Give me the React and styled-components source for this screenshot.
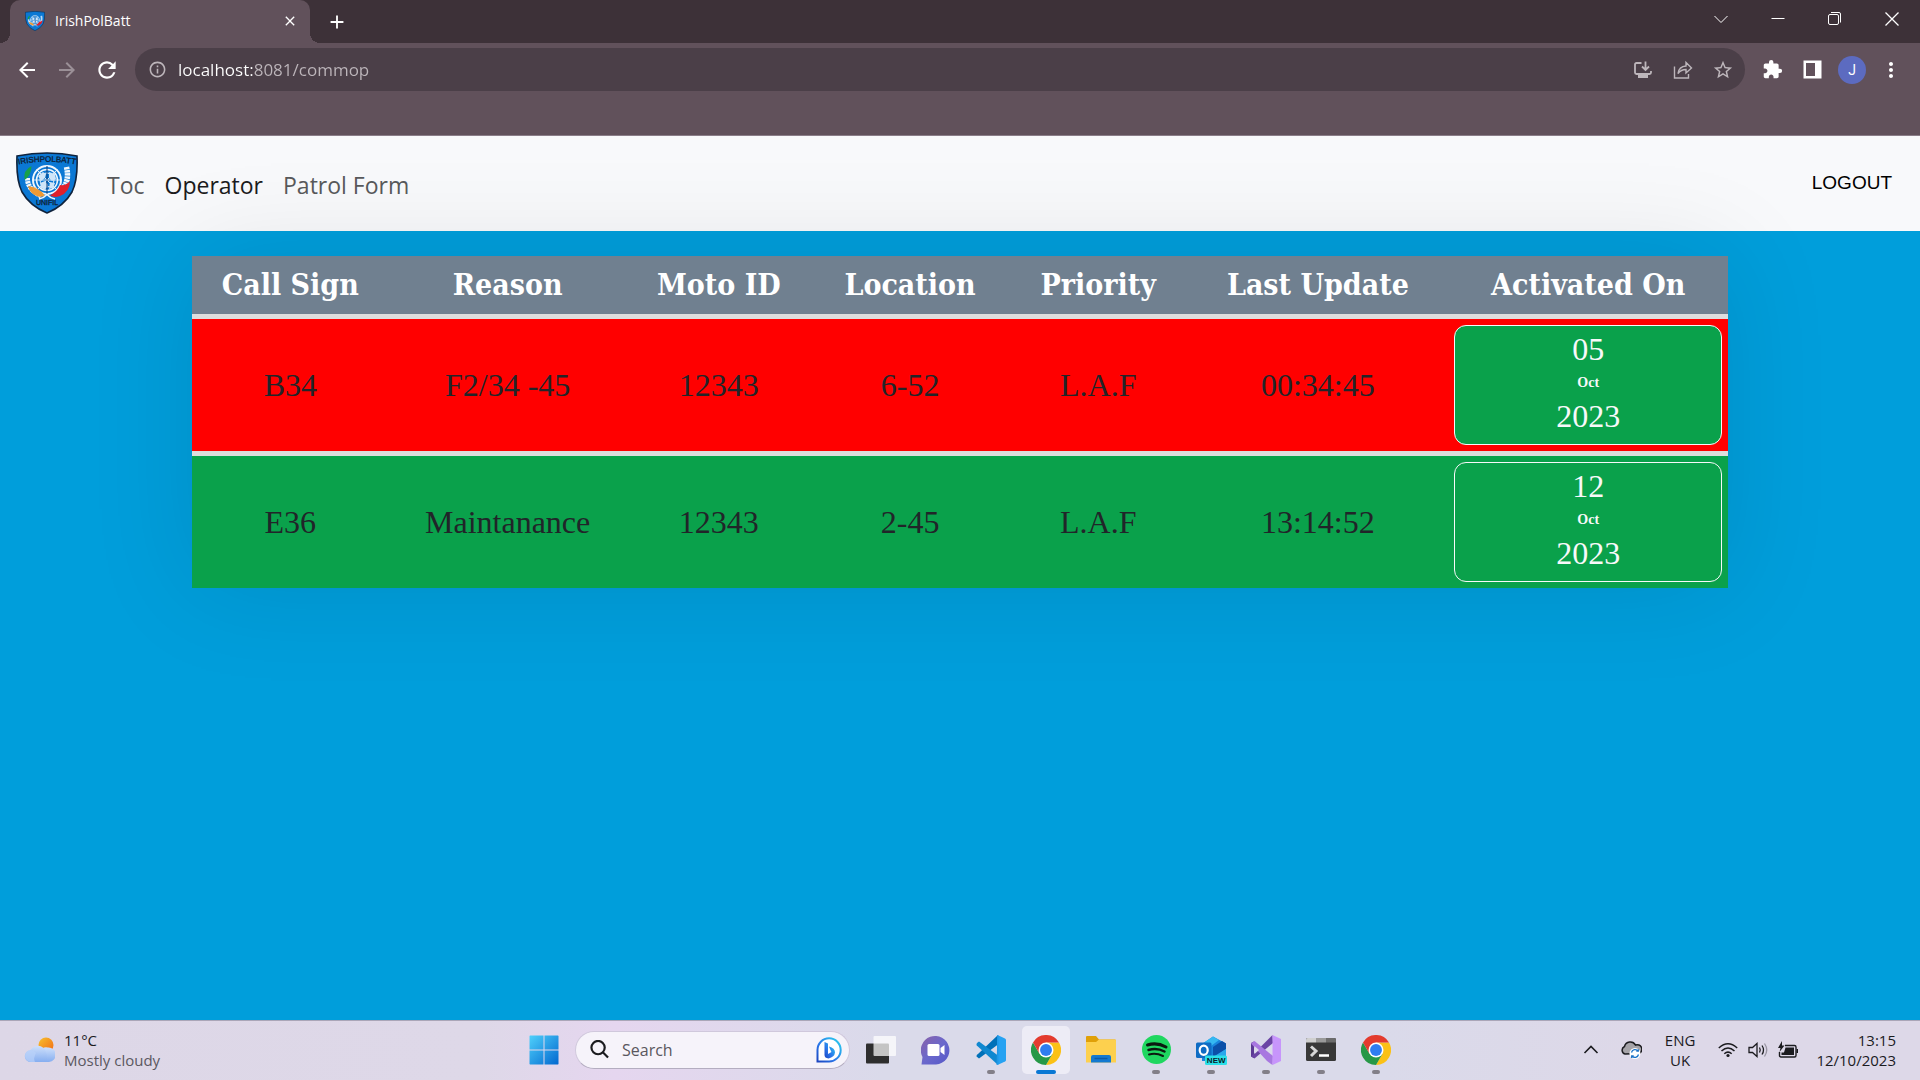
import React from "react";
import styled, { createGlobalStyle } from "styled-components";
import {
  MdArrowBack,
  MdArrowForward,
  MdRefresh,
  MdInfoOutline,
  MdStarBorder,
  MdExtension,
  MdMoreVert,
  MdClose,
  MdAdd,
} from "react-icons/md";

const UI = `"Open Sans", "Noto Sans", sans-serif`;
const SERIF = `"Liberation Serif", serif`;

const GlobalStyle = createGlobalStyle`
  *, *::before, *::after { box-sizing: border-box; }
  body { margin: 0; font-family: ${UI}; }
  button { font: inherit; color: inherit; border: 0; padding: 0; background: none; }
  svg { display: block; flex: none; }
`;

const Desktop = styled.div`
  min-height: 100vh;
  display: flex;
  flex-direction: column;
  background: #009edb;
`;

/* ---------- browser window ---------- */

const TabStrip = styled.div`
  height: 43px;
  display: flex;
  align-items: stretch;
  background: #3d3138;
  color: #fff;
`;

const Tab = styled.div`
  position: relative;
  width: 300px;
  margin-left: 10px;
  padding: 0 10px 2px 15px;
  display: flex;
  align-items: center;
  gap: 10px;
  border-radius: 10px 10px 0 0;
  background: #61515b;
  font-size: 14px;

  &::before,
  &::after {
    content: "";
    position: absolute;
    bottom: 0;
    width: 10px;
    height: 10px;
  }
  &::before {
    left: -10px;
    background: radial-gradient(circle at 0 0, #3d3138 10px, #61515b 10px);
  }
  &::after {
    right: -10px;
    background: radial-gradient(circle at 100% 0, #3d3138 10px, #61515b 10px);
  }
`;

const TabTitle = styled.span`
  flex: 1;
`;

const IconButton = styled.button`
  width: ${(p) => p.$w || 40}px;
  display: flex;
  align-items: center;
  justify-content: center;
  color: ${(p) => p.$color || "#fff"};
`;

const WindowControls = styled.div`
  margin-left: auto;
  height: 38px;
  display: flex;
`;

const Toolbar = styled.div`
  height: 93px;
  padding: 5px 10px 0 7px;
  display: flex;
  align-items: flex-start;
  background: #61515b;
  border-bottom: 1px solid #8a7d88;
`;

const ToolGroup = styled.div`
  height: 43px;
  display: flex;
  align-items: center;
`;

const Omnibox = styled.form`
  flex: 1;
  height: 43px;
  margin: 0 7px 0 8px;
  padding: 0 2px 0 13px;
  display: flex;
  align-items: center;
  gap: 11px;
  border-radius: 22px;
  background: #4b3f48;
  color: #bdb6bb;
`;

const Address = styled.input`
  flex: 1;
  min-width: 0;
  height: 32px;
  padding: 0;
  border: 0;
  outline: 0;
  font: 17px ${UI};
  color: #bdb6bb;
  -webkit-text-fill-color: transparent;
  background: linear-gradient(90deg, #fff 75px, #bdb6bb 75px);
  background-clip: text;
  -webkit-background-clip: text;
`;

const Avatar = styled.span`
  width: 28px;
  height: 28px;
  border-radius: 50%;
  background: #5c6bc0;
  font-family: Roboto, sans-serif;
  font-size: 14px;
  line-height: 28px;
  text-align: center;
`;

/* ---------- web page ---------- */

const NavBar = styled.header`
  height: 95px;
  padding: 0 28px 2px 16px;
  display: flex;
  align-items: center;
  background: #f8f9fb;
`;

const Brand = styled.a`
  margin-right: 19px;
`;

const NavLinks = styled.nav`
  flex: 1;
  display: flex;
`;

const NavLink = styled.a`
  padding: 4px 10px 0;
  font-size: 23px;
  line-height: 36px;
  color: ${(p) => (p.$active ? "#1c1c1d" : "#58595b")};
  text-decoration: none;
`;

const Logout = styled.button`
  && {
    font-family: "Liberation Sans", sans-serif;
    font-size: 19px;
    line-height: 28px;
    color: #000;
  }
`;

const Main = styled.main`
  flex: 1;
  padding: 25px 10%;
`;

const CallTable = styled.table`
  width: 100%;
  table-layout: fixed;
  border-spacing: 0;
  box-shadow: 0 0 100px rgba(0, 0, 0, 0.1);
  text-align: center;
  font-family: ${SERIF};
`;

const HeadCell = styled.th`
  width: ${(p) => p.$share}%;
  height: 58px;
  padding: 0;
  background: #708090;
  color: #fff;
  font-family: "DejaVu Serif Condensed", "DejaVu Serif", serif;
  font-size: 30px;
  line-height: 36px;
  font-weight: 700;
  white-space: nowrap;
`;

const CallRow = styled.tr`
  background: ${(p) => (p.$urgent ? "#ff0000" : "#0aa14b")};
`;

const Cell = styled.td`
  padding: 6px;
  border-top: 5px solid #ddd;
  font-size: 32px;
  color: #212529;
`;

const DateCard = styled.time`
  height: 120px;
  padding-top: 6px;
  display: flex;
  flex-direction: column;
  border: 1px solid #f8f9fa;
  border-radius: 12px;
  background: #0aa14b;
  color: #f8f9fa;
  line-height: 35px;
`;

const Month = styled.b`
  font-size: 14px;
  line-height: 32px;
`;

/* ---------- taskbar ---------- */

const Taskbar = styled.footer`
  height: 60px;
  padding-bottom: 2px;
  display: grid;
  grid-template-columns: 1fr auto 1fr;
  align-items: center;
  border-top: 1px solid #aaa6b8;
  background: linear-gradient(90deg, #ddd7e7 0%, #ded8e8 25%, #e5d6ef 32%, #dadaea 46%, #dadaea 72%, #ddd8e8 85%);
  color: #1b1b1f;
  font-size: 15px;
  line-height: 20px;
`;

const Weather = styled.button`
  padding: 0 0 0 24px;
  display: flex;
  align-items: center;
  gap: 9px;
  text-align: left;
  justify-self: start;
`;

const Line = styled.span`
  display: block;
  color: ${(p) => (p.$soft ? "#5b5861" : "inherit")};
`;

const Apps = styled.div`
  display: flex;
  align-items: center;
  gap: 7px;
`;

const AppButton = styled.button`
  position: relative;
  width: 48px;
  height: 48px;
  display: flex;
  align-items: center;
  justify-content: center;
  border-radius: 5px;
  background: ${(p) => (p.$mark === "active" ? "#edecf6" : "transparent")};

  &::after {
    content: "";
    position: absolute;
    bottom: 0;
    left: 50%;
    transform: translateX(-50%);
    width: ${(p) => (p.$mark === "active" ? 20 : p.$mark ? 8 : 0)}px;
    height: 4px;
    border-radius: 2px;
    background: ${(p) => (p.$mark === "active" ? "#0a78d4" : "#827f88")};
  }
`;

const SearchBox = styled.label`
  width: 275px;
  height: 38px;
  padding: 0 7px 0 14px;
  display: flex;
  align-items: center;
  gap: 13px;
  border: 1px solid #d0c8dc;
  border-bottom-color: #b4adc0;
  border-radius: 19px;
  background: #f6f3fa;
`;

const SearchInput = styled.input`
  flex: 1;
  min-width: 0;
  border: 0;
  padding: 0;
  outline: 0;
  background: none;
  font: 16px ${UI};
  &::placeholder {
    color: #5a575e;
    opacity: 1;
  }
`;

const Tray = styled.div`
  padding-right: 24px;
  display: flex;
  align-items: center;
  justify-content: flex-end;
`;

const TrayGroup = styled.div`
  display: flex;
  align-items: center;
  gap: ${(p) => p.$gap}px;
  margin-right: ${(p) => p.$after}px;
`;

const TrayText = styled.button`
  text-align: ${(p) => p.$align};
`;

/* ---------- drawings ---------- */

function Shield({ size, lettered }) {
  return (
    <svg width={size} height={size} viewBox="0 0 62 62" aria-hidden="true">
      <path
        d="M1 4Q31-2 61 4Q62 28 56 40Q48 54 31 61Q14 54 6 40Q0 28 1 4z"
        fill="#0b78d4"
        stroke="#10233c"
        strokeWidth="1.6"
      />
      {lettered && (
        <>
          <path id="arc-top" d="M2 12.500Q31 7 60 12.500" fill="none" />
          <text fontFamily="Liberation Sans, sans-serif" fontSize="8" fill="#0d1c33" stroke="#0d1c33" strokeWidth=".3">
            <textPath href="#arc-top" startOffset="50%" textAnchor="middle">
              IRISHPOLBATT
            </textPath>
          </text>
          <text x="31" y="53" textAnchor="middle" fontFamily="Liberation Sans, sans-serif" fontSize="7" fill="#0d1c33" stroke="#0d1c33" strokeWidth=".3">
            UNIFIL
          </text>
        </>
      )}
      <g fill="none" stroke="#f0f7fd">
        <circle cx="31" cy="28" r="14" strokeWidth="2" />
        <circle cx="31" cy="28" r="10.500" strokeWidth="1.500" />
        <circle cx="31" cy="28" r="7" strokeWidth="1" />
        <path d="M16.500 28h29M20.500 17.500l21 21M41.500 17.500l-21 21" strokeWidth=".9" />
      </g>
      <path d="M22 24l5-4 3 2-1 4-4 3zM33 20l6 2 1 5-4 2-3-3zM24 31l5-2 3 4-3 5-4-2zM34 30l5 1-2 5-4 1z" fill="#cfe5f8" />
      <path d="M31 14v28" stroke="#0d3d78" strokeWidth="1" />
      <g fill="none" strokeDasharray="2.500 .6">
        <path d="M11.500 26Q11 37 25 44" stroke="#f0f7fd" strokeWidth="5" />
        <path d="M50.500 15Q54 30 45 38" stroke="#f0f7fd" strokeWidth="5.500" />
      </g>
      <path d="M15.500 14Q7 18 8.500 28Q15 24 15.500 14z" fill="#18a048" />
      <path d="M12 34Q14 42 22 44.500Q26 45.500 29 43.500Q24 36 12 34z" fill="#ee9a34" />
      <path d="M54 29Q54 40 44 44Q38 46 34 43.500Q42 39 44 33Q50 34 54 29z" fill="#e0202c" />
      <path d="M23 47q5-1 8-4.500q3 3.500 8 4.500" fill="none" stroke="#f0f7fd" strokeWidth="1.500" />
    </svg>
  );
}

const Stroke = ({ size = 20, width = 1, children, vb = 20 }) => (
  <svg width={size} height={size} viewBox={`0 0 ${vb} ${vb}`} fill="none" stroke="currentColor" strokeWidth={width} aria-hidden="true">
    {children}
  </svg>
);

const ChromeLogo = () => (
  <svg width="30" height="30" viewBox="0 0 48 48" aria-hidden="true">
    <path d="M24 12H44.800A24 24 0 0 1 24 48L34.400 30z" fill="#fbc116" />
    <path d="M34.400 30L24 48A24 24 0 0 1 3.200 12L13.600 30z" fill="#279847" />
    <path d="M3.200 12A24 24 0 0 1 44.800 12H24L13.600 30z" fill="#e33b2e" />
    <circle cx="24" cy="24" r="12" fill="#fff" />
    <circle cx="24" cy="24" r="9.500" fill="#2f7df0" />
  </svg>
);

const WeatherIcon = () => (
  <svg width="31" height="28" viewBox="0 0 31 28" aria-hidden="true">
    <defs>
      <linearGradient id="sun" x1="0" y1="0" x2="1" y2="1">
        <stop offset="0" stopColor="#f7c12d" />
        <stop offset="1" stopColor="#f26a14" />
      </linearGradient>
      <linearGradient id="cloud" x1="0" y1="0" x2="0" y2="1">
        <stop offset="0" stopColor="#cfe0fb" />
        <stop offset="1" stopColor="#86aef0" />
      </linearGradient>
    </defs>
    <circle cx="22" cy="9" r="7.500" fill="url(#sun)" />
    <path d="M24 11.500a7 7 0 0 1 1 14.500H14V20a8 8 0 0 1 10-8.500z" fill="url(#cloud)" />
    <path d="M7 26a6 6 0 0 1-.500-12A8.500 8.500 0 0 1 20 12.500Q24 18 23 26z" fill="url(#cloud)" />
    <path d="M1 20a6 6 0 0 1 11-3q-3 5-1 9H7a6 6 0 0 1-6-6z" fill="#b9d1fa" opacity=".7" />
  </svg>
);

const WindowsLogo = () => (
  <svg width="30" height="30" viewBox="0 0 30 30" aria-hidden="true">
    <defs>
      <linearGradient id="win" x1="0" y1="0" x2="1" y2="1">
        <stop offset="0" stopColor="#4fd0fb" />
        <stop offset="1" stopColor="#0268cf" />
      </linearGradient>
    </defs>
    <path d="M1 .5h13.500V14.500H.5V1zM15.500 .5H29l.5.500V14.500H15.500zM.5 15.500H14.500V29.500H1L.5 29zM15.500 15.500H29.500V29l-.5.500H15.500z" fill="url(#win)" />
  </svg>
);

const BingLogo = () => (
  <svg width="26" height="26" viewBox="0 0 26 26" aria-hidden="true">
    <defs>
      <linearGradient id="bing" x1="1" y1="0" x2="0" y2="1">
        <stop offset="0" stopColor="#2bd3ee" />
        <stop offset=".6" stopColor="#2a76ea" />
        <stop offset="1" stopColor="#1c45c0" />
      </linearGradient>
    </defs>
    <path d="M1.500 24.500V13A11.600 11.600 0 1 1 13 24.500z" fill="#fff" stroke="url(#bing)" strokeWidth="2" />
    <path d="M8.500 5l3.500 1.500V17l3.500-2-1.500-3-1-2.500Q19 11 19 15.500Q18.500 20 12.500 21.500Q8.500 21 8.500 18z" fill="url(#bing)" />
  </svg>
);

const TaskView = () => (
  <svg width="30" height="28" viewBox="0 0 30 28" aria-hidden="true">
    <rect x="0" y="7.500" width="23" height="20" rx="1" fill="#2e2e2e" />
    <rect x="7.500" y="0" width="22.500" height="20" rx="1" fill="#fff" opacity=".72" />
  </svg>
);

const ChatLogo = () => (
  <svg width="30" height="30" viewBox="0 0 30 30" aria-hidden="true">
    <defs>
      <linearGradient id="chat" x1="0" y1="0" x2="1" y2="1">
        <stop offset="0" stopColor="#8a62a8" />
        <stop offset=".5" stopColor="#6b68cc" />
        <stop offset="1" stopColor="#5558c8" />
      </linearGradient>
    </defs>
    <path d="M.5 29.500L1.500 22A14.300 14.300 0 1 1 15 29.500H.5z" fill="url(#chat)" />
    <rect x="6.500" y="9" width="12" height="12" rx="1.500" fill="#fff" />
    <path d="M19.500 13l4-3v10l-4-3z" fill="#fff" />
  </svg>
);

const CodeLogo = () => (
  <svg width="30" height="30" viewBox="0 0 30 30" aria-hidden="true">
    <path d="M22 0L2.500 18.500Q0 20 .5 21.500L3 23.500L24 8z" fill="#0070b8" />
    <path d="M22 30L.8 10.500Q0 9 1 8L3 6.500L24 22z" fill="#1088d0" />
    <path d="M21.500 0L29 3.500Q30 4 30 5V25Q30 26 29 26.500L21.500 30L21 8z" fill="#26a2f2" />
    <path d="M20.500 30L21.500 0L22.500 1V29z" fill="#1f97e6" />
  </svg>
);

const FolderLogo = () => (
  <svg width="30" height="27" viewBox="0 0 30 27" aria-hidden="true">
    <path d="M0 1Q0 0 1 0H10L13 3.500H29Q30 3.500 30 5V10H0z" fill="#e0a008" />
    <path d="M0 6H10L13 3.500H29Q30 3.500 30 4.500V26.500H0z" fill="#fdd04e" />
    <path d="M5 26.500V21Q5 19 7 19H23Q25 19 25 21V26.500z" fill="#1379d0" />
    <path d="M8.500 22.500H21.500" stroke="#0a5aa8" strokeWidth="1.500" />
  </svg>
);

const SpotifyLogo = () => (
  <svg width="29" height="29" viewBox="0 0 29 29" fill="none" stroke="#0b1a10" strokeLinecap="round" aria-hidden="true">
    <circle cx="14.500" cy="14.500" r="14.500" fill="#1fd760" stroke="none" />
    <path d="M5.500 10Q15 7 24 12" strokeWidth="3" />
    <path d="M6.500 15Q15 12.500 22.500 16.500" strokeWidth="2.500" />
    <path d="M7 19.500Q14 17.500 21 21" strokeWidth="2" />
  </svg>
);

const OutlookLogo = () => (
  <svg width="31" height="30" viewBox="0 0 31 30" aria-hidden="true">
    <path d="M6 9L17 1.500L30 8.500V26H6z" fill="#1a84dc" />
    <path d="M6 9L17 1.500L23 5L11 14z" fill="#35b8f1" />
    <path d="M17 12L26 6L30 8.500V14L17 23z" fill="#0b4fa8" />
    <path d="M17 22L30 14V27H10z" fill="#29a8ec" />
    <rect x="0" y="7.500" width="15.500" height="15.500" rx="1.500" fill="#0f6cc4" />
    <ellipse cx="7.700" cy="15.300" rx="4" ry="4.600" fill="none" stroke="#fff" strokeWidth="2.200" />
    <rect x="9" y="20.500" width="22" height="9.500" rx="1.500" fill="#2be0e8" />
    <text x="20.200" y="28" textAnchor="middle" fontFamily="Liberation Sans, sans-serif" fontWeight="700" fontSize="8" fill="#081c28">
      NEW
    </text>
  </svg>
);

const VisualStudioLogo = () => (
  <svg width="30" height="30" viewBox="0 0 30 30" aria-hidden="true">
    <path d="M0 8L3 6.500V23L0 21.500z" fill="#5b3a94" />
    <path d="M0 21.500L21.500 0L22 8L3.500 23.500z" fill="#6a44a4" />
    <path d="M0 8.500L3.500 6L22 21L21.500 30L16 26z" fill="#a878e0" />
    <path d="M21.500 0L30 4V26L21.500 30z" fill="#c795fb" />
    <path d="M8 15L3.500 19V11z" fill="#dadaea" />
  </svg>
);

const TerminalLogo = () => (
  <svg width="30" height="23" viewBox="0 0 30 23" aria-hidden="true">
    <rect width="30" height="23" rx="1.500" fill="#383838" />
    <path d="M0 4.500V1.500Q0 0 1.500 0H10V4.500z" fill="#d0d0d0" />
    <path d="M10 0h10v4.500H10z" fill="#9a9a9a" />
    <path d="M20 0h8.500Q30 0 30 1.500V4.500H20z" fill="#6c6c6c" />
    <path d="M5 8.500l5 4.500-5 5" fill="none" stroke="#d8d8d8" strokeWidth="3" />
    <path d="M13 17.500h10" stroke="#fff" strokeWidth="2.500" />
  </svg>
);

const CloudSync = () => (
  <svg width="22" height="18" viewBox="0 0 22 18" aria-hidden="true">
    <path d="M5 13A4 4 0 0 1 4.500 5.500A6 6 0 0 1 15.500 4A4.500 4.500 0 0 1 19 12.500z" fill="#a5a3a8" stroke="#1b1b1f" strokeWidth="1.500" />
    <circle cx="15" cy="12.500" r="5.500" fill="#fff" />
    <path d="M11.500 11.500a3.700 3.700 0 0 1 6.500-1.500M18.500 13.500a3.700 3.700 0 0 1-6.500 1.500M18.300 8.200v2h-2M11.700 17v-2h2" fill="none" stroke="#1a72c8" strokeWidth="1.300" />
  </svg>
);

const Wifi = () => (
  <Stroke size={20} width={1.5}>
    <path d="M.8 8Q10-.5 19.200 8M3.500 11Q10 5 16.500 11M6.300 13.800Q10 10.500 13.700 13.800" />
    <circle cx="10" cy="15.500" r="1.600" fill="currentColor" stroke="none" />
  </Stroke>
);

const Speaker = () => (
  <Stroke size={20} width={1.3}>
    <path d="M1 7.500h3.500L9 3.500v13L4.500 12.500H1zM11.500 7.500q1.500 2.500 0 5M14 5.500q3 4.500 0 9" />
    <path d="M16.500 3.500q4.500 6.500 0 13" opacity=".35" />
  </Stroke>
);

const Battery = () => (
  <svg width="21" height="18" viewBox="0 0 21 18" aria-hidden="true">
    <path d="M7 4.500h9.500Q18 4.500 18 6v8.500Q18 16 16.500 16H3Q1.500 16 1.500 14.500V11" fill="none" stroke="currentColor" strokeWidth="1.400" />
    <path d="M7.500 6.500H16V14H3.500V11.500H6z" fill="currentColor" />
    <path d="M18.500 8h1.500v4h-1.500zM4 0L0 7h2.500L1.500 11L6.500 4.500H4z" fill="currentColor" />
  </svg>
);

/* ---------- data ---------- */

const columns = [
  ["Call Sign", 12.8],
  ["Reason", 15.5],
  ["Moto ID", 12],
  ["Location", 12.9],
  ["Priority", 11.6],
  ["Last Update", 17],
  ["Activated On", 18.2],
];

const calls = [
  { cells: ["B34", "F2/34 -45", "12343", "6-52", "L.A.F", "00:34:45"], date: ["05", "Oct", "2023"], urgent: true },
  { cells: ["E36", "Maintanance", "12343", "2-45", "L.A.F", "13:14:52"], date: ["12", "Oct", "2023"], urgent: false },
];

const apps = [
  ["Task view", TaskView],
  ["Chat", ChatLogo],
  ["Visual Studio Code", CodeLogo, "open"],
  ["Google Chrome", ChromeLogo, "active"],
  ["File Explorer", FolderLogo],
  ["Spotify", SpotifyLogo, "open"],
  ["Outlook", OutlookLogo, "open"],
  ["Visual Studio", VisualStudioLogo, "open"],
  ["Terminal", TerminalLogo, "open"],
  ["Chrome", ChromeLogo, "open"],
];

function BrowserChrome() {
  return (
    <>
      <TabStrip>
        <Tab>
          <Shield size={20} />
          <TabTitle>IrishPolBatt</TabTitle>
          <IconButton $w={20} aria-label="Close tab">
            <MdClose size={16} />
          </IconButton>
        </Tab>
        <IconButton $w={54} aria-label="New tab">
          <MdAdd size={22} />
        </IconButton>
        <WindowControls>
          <IconButton $w={57} aria-label="Search tabs">
            <Stroke>
              <path d="M3.500 7l6.500 6.500L16.500 7" />
            </Stroke>
          </IconButton>
          <IconButton $w={57} aria-label="Minimise">
            <Stroke>
              <path d="M3.500 9.500h13" />
            </Stroke>
          </IconButton>
          <IconButton $w={57} aria-label="Restore">
            <Stroke>
              <rect x="3.500" y="5.500" width="10" height="10" rx="1.500" />
              <path d="M6 3.500h8q1.500 0 1.500 1.500v8.500" />
            </Stroke>
          </IconButton>
          <IconButton $w={57} aria-label="Close">
            <Stroke width={1.3}>
              <path d="M3.500 3.500l13 13M16.500 3.500l-13 13" />
            </Stroke>
          </IconButton>
        </WindowControls>
      </TabStrip>
      <Toolbar>
        <ToolGroup>
          <IconButton aria-label="Back">
            <MdArrowBack size={24} />
          </IconButton>
          <IconButton aria-label="Forward" $color="#9b9097">
            <MdArrowForward size={24} />
          </IconButton>
          <IconButton aria-label="Reload">
            <MdRefresh size={26} />
          </IconButton>
        </ToolGroup>
        <Omnibox>
          <MdInfoOutline size={19} />
          <Address aria-label="Address" defaultValue="localhost:8081/commop" />
          <ToolGroup>
            <IconButton type="button" aria-label="Install" $color="#bdb6bb">
              <Stroke width={1.8}>
                <path d="M8.500 3H3.500Q2 3 2 4.500v8Q2 14 3.500 14h13Q18 14 18 12.500V11M12.500 1.500v8M9 6.500l3.500 3.500L16 6.500" />
                <path d="M5 16.500h10" strokeWidth="3" />
              </Stroke>
            </IconButton>
            <IconButton type="button" aria-label="Share" $color="#bdb6bb">
              <Stroke width={1.4}>
                <path d="M1.500 6.500V18h14V14M5 13.500Q6 6.500 13 6V2.500L18.500 8L13 13V9.500Q8 9.500 5 13.500z" />
              </Stroke>
            </IconButton>
            <IconButton type="button" aria-label="Bookmark" $color="#bdb6bb">
              <MdStarBorder size={22} />
            </IconButton>
          </ToolGroup>
        </Omnibox>
        <ToolGroup>
          <IconButton aria-label="Extensions">
            <MdExtension size={21} />
          </IconButton>
          <IconButton aria-label="Side panel">
            <svg width="19" height="19" viewBox="0 0 19 19" aria-hidden="true">
              <path d="M.5.500h18v18H.5zM3 3v13h9V3z" fill="currentColor" fillRule="evenodd" />
            </svg>
          </IconButton>
          <IconButton aria-label="Profile">
            <Avatar>J</Avatar>
          </IconButton>
          <IconButton $w={38} aria-label="Menu">
            <MdMoreVert size={24} />
          </IconButton>
        </ToolGroup>
      </Toolbar>
    </>
  );
}

function CallList() {
  return (
    <CallTable>
      <thead>
        <tr>
          {columns.map(([name, share]) => (
            <HeadCell key={name} $share={share} scope="col">
              {name}
            </HeadCell>
          ))}
        </tr>
      </thead>
      <tbody>
        {calls.map(({ cells, date: [day, month, year], urgent }) => (
          <CallRow key={cells[0]} $urgent={urgent}>
            {cells.map((text, i) => (
              <Cell key={i}>{text}</Cell>
            ))}
            <Cell>
              <DateCard dateTime={`${year}-10-${day}`}>
                <span>{day}</span>
                <Month>{month}</Month>
                <span>{year}</span>
              </DateCard>
            </Cell>
          </CallRow>
        ))}
      </tbody>
    </CallTable>
  );
}

export default function App() {
  return (
    <Desktop>
      <GlobalStyle />
      <BrowserChrome />
      <NavBar>
        <Brand href="#home" aria-label="IrishPolBatt">
          <Shield size={62} lettered />
        </Brand>
        <NavLinks>
          <NavLink href="#toc">Toc</NavLink>
          <NavLink href="#commop" $active>
            Operator
          </NavLink>
          <NavLink href="#patrol">Patrol Form</NavLink>
        </NavLinks>
        <Logout>LOGOUT</Logout>
      </NavBar>
      <Main>
        <CallList />
      </Main>
      <Taskbar>
        <Weather>
          <WeatherIcon />
          <span>
            <Line>11°C</Line>
            <Line $soft>Mostly cloudy</Line>
          </span>
        </Weather>
        <Apps>
          <AppButton aria-label="Start">
            <WindowsLogo />
          </AppButton>
          <SearchBox>
            <Stroke size={19} width={2.3}>
              <circle cx="8.500" cy="8" r="7" />
              <path d="M13.500 13l5.500 5.500" />
            </Stroke>
            <SearchInput type="text" aria-label="Search" placeholder="Search" />
            <BingLogo />
          </SearchBox>
          {apps.map(([name, Logo, mark]) => (
            <AppButton key={name} aria-label={name} $mark={mark}>
              <Logo />
            </AppButton>
          ))}
        </Apps>
        <Tray>
          <TrayGroup $gap={19} $after={23}>
            <Stroke size={20} width={1.6}>
              <path d="M3.500 13l6.500-6.500 6.500 6.500" />
            </Stroke>
            <CloudSync />
          </TrayGroup>
          <TrayGroup $gap={10} $after={23}>
            <TrayText $align="center">
              <Line>ENG</Line>
              <Line>UK</Line>
            </TrayText>
          </TrayGroup>
          <TrayGroup $gap={10} $after={17}>
            <Wifi />
            <Speaker />
            <Battery />
          </TrayGroup>
          <TrayText $align="right">
            <Line>13:15</Line>
            <Line>12/10/2023</Line>
          </TrayText>
        </Tray>
      </Taskbar>
    </Desktop>
  );
}
